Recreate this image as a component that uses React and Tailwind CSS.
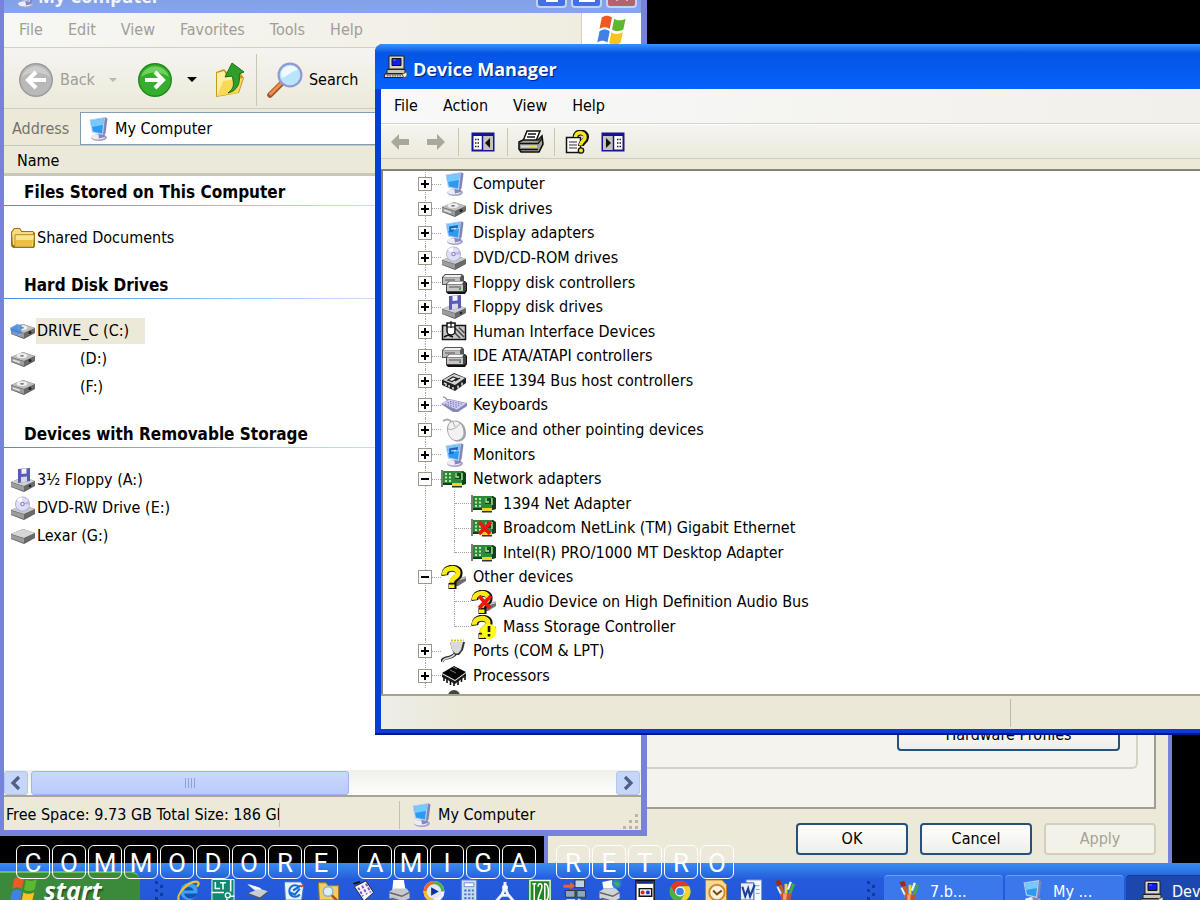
import React from 'react'

const UI = "font-['DejaVu_Sans_Condensed','DejaVu_Sans',sans-serif]"

/* ---------- icons ---------- */

function Svg({ children, className = 'h-6 w-[26px]', box = '0 0 26 24' }){
  return <svg className={`block shrink-0 ${className}`} viewBox={box} aria-hidden="true">{children}</svg>
}

function ComputerArt(){
  return (
    <>
      <ellipse cx="14" cy="20.500" rx="8" ry="3.500" fill="#a3a3c6" />
      <ellipse cx="13" cy="19.800" rx="7" ry="2.600" fill="#ededf8" />
      <path d="M13 15l6-1 1 6-6 1.500z" fill="#8886bd" />
      <path d="M19.500 0l3 1.500-2 15-3.500 2z" fill="#8082b8" />
      <path d="M4.500 2.500L20 0l-2 18L7 15.500z" fill="#bccdf0" />
      <path d="M5.800 3.800L18.700 1.500 17 16.500 8 14.500z" fill="#2a9bee" />
      <path d="M5.800 3.800L18.700 1.500 18 8 7 10z" fill="#74caff" />
    </>
  )
}

function Computer({ className }){
  return <Svg className={className}><ComputerArt /></Svg>
}

function Display(){
  return (
    <Svg>
      <ComputerArt />
      <path d="M8 5.500l9-1.500-.4 3-3.400.6-1 3-3.700.6z" fill="#1c62c4" />
      <path d="M10 8l5-.7" stroke="#a9f0ff" strokeWidth="1.200" />
    </Svg>
  )
}

function DriveArt({ top = '#e6e6e6' }){
  return (
    <>
      <path d="M1 10l12-5 12 4v5l-11 6-13-5z" fill="#5c5c5c" />
      <path d="M1 10l12-5 12 4-11 5z" fill={top} />
      <path d="M1 10.500l13 4v4.500L1 14.500z" fill="#9c9c9c" />
      <path d="M14 14.500l11-5v4L14 19z" fill="#6a6a6a" />
    </>
  )
}

function Disk({ blue }){
  return (
    <Svg>
      <DriveArt top="#bdbdbd" />
      <ellipse cx="12" cy="8.800" rx="5.500" ry="2.500" fill="#f0f0f0" />
      <ellipse cx="12" cy="8.800" rx="2" ry=".9" fill="#777" />
      <path d="M3 13l7 2.500" stroke="#e4e4e4" strokeWidth="1.500" />
      <circle cx="20" cy="13.500" r="1.500" fill="#222" />
      {blue && <path d="M0 9l7-4 5 1-1 9-3 1-7-3z" fill="#3f84dc" opacity=".8" />}
    </Svg>
  )
}

function PlainDrive(){
  return <Svg><DriveArt top="#d6d6d6" /></Svg>
}

function Dvd(){
  return (
    <Svg>
      <g transform="translate(0 4)"><DriveArt top="#c9c9c9" /></g>
      <circle cx="12.500" cy="8" r="7.500" fill="#aaaad2" />
      <circle cx="12.500" cy="8" r="6.700" fill="#dedef6" />
      <path d="M12.500 8L7 3.500A7 7 0 0 1 12 1.300z" fill="#fff" />
      <path d="M12.500 8l6-3a7 7 0 0 1 .5 3.500z" fill="#b8b6ee" />
      <circle cx="12.500" cy="8" r="2.300" fill="#8c8ad0" />
      <circle cx="12.500" cy="8" r="1.100" fill="#fff" />
    </Svg>
  )
}

function Floppy(){
  return (
    <Svg>
      <g transform="translate(0 4)"><DriveArt top="#cfcfcf" /></g>
      <path d="M8 1l12-1v13l-12 2z" fill="#5a5cb4" />
      <path d="M11.500 1l5-.5v5l-5 .5z" fill="#f2f2fc" />
      <path d="M11 9l6-.5v5l-6 1z" fill="#d8d8f0" />
      <circle cx="20" cy="18" r="1.300" fill="#222" />
    </Svg>
  )
}

function Controllers(){
  return (
    <Svg>
      <path d="M1 6l3-3h17l2 2v9H1z" fill="#555" />
      <path d="M2 6.500L4.500 4h16L19 6.500z" fill="#f0f0f0" />
      <path d="M2 7h17v6H2z" fill="#bdbdbd" />
      <path d="M4 9h10" stroke="#555" />
      <path d="M22 10h2l2 2v8l-2 3H7l-2-2 17-1z" fill="#111" />
      <path d="M5 13l3-3h15l2 2v7l-2 2H5z" fill="#444" />
      <path d="M6 13l2.500-2.500h14L21 13z" fill="#fbfbfb" />
      <path d="M6 13.500h16V20H6z" fill="#c6c6c6" />
      <path d="M8 16h12" stroke="#555" />
      <path d="M18 18h2" stroke="#2c8c2c" strokeWidth="1.500" />
    </Svg>
  )
}

function Hid(){
  return (
    <Svg>
      <path d="M1.500 5.500h23v14h-23z" fill="#c8c8c8" stroke="#111" strokeWidth="1.500" />
      <path d="M14 8l9 9M18 7.500l5.500 5.500M13 12l6 6" stroke="#444" strokeWidth="1.500" />
      <path d="M6 3v8a4 4 0 0 0 8 0V3z" fill="#fff" stroke="#111" strokeWidth="1.500" />
      <path d="M10 1v7M6 7h8" stroke="#111" strokeWidth="1.200" />
      <path d="M3 17l4-2 5 2" stroke="#111" strokeWidth="1.500" fill="none" />
    </Svg>
  )
}

function Firewire(){
  return (
    <Svg>
      <path d="M1 11L13 4l12 5v5l-11 8-13-6z" fill="#222" />
      <path d="M2 11l11-6 11 4-10 7z" fill="#d5d5d5" />
      <path d="M7 11l5-3 4 1.500-5 3zM14 12l5-3" stroke="#222" strokeWidth="1.200" fill="#f4f4f4" />
      <path d="M3 14l2 1v2M8 16v2.500M12 18v2.500M17 16.500v3M21 13.500v3" stroke="#ddd" strokeWidth="1.500" />
    </Svg>
  )
}

function Keyboard(){
  return (
    <Svg>
      <path d="M2 4c4 0 2 3 6 3" stroke="#9a9ac0" strokeWidth="1.500" fill="none" />
      <path d="M0 11l8-5 18 4v3l-9 6-5 0z" fill="#8685b8" />
      <path d="M1 10.500L8.500 6.500 25 10.500l-9 6z" fill="#d3d2f0" />
      <path d="M4 11l13 3.500M6.500 9.500l13 3.500M9 8.300l13 3" stroke="#7a79b8" strokeWidth="1.200" strokeDasharray="1.500 1.200" />
    </Svg>
  )
}

function Mouse(){
  return (
    <Svg>
      <path d="M2 3c5-3 8-1 10 3" stroke="#aaa" strokeWidth="2" fill="none" />
      <path d="M8 5c7-6 17 0 17 10 0 6-4 9-9 8.500C8 23 3 11 8 5z" fill="#a2a2a8" />
      <path d="M8.500 5.500c7-5 14 0 14 9.500 0 5-4 7.500-8 7C8 21.500 5 11.500 8.500 5.500z" fill="#f2f2f4" />
      <path d="M7 11c4 1.500 9-1 12-6M12 4l2 5" stroke="#aaa" fill="none" />
    </Svg>
  )
}

function CardArt(){
  return (
    <>
      <path d="M1 4h21l3 2v11l-3 1H1z" fill="#11401a" />
      <path d="M1 4h20v12H1z" fill="#2c8a38" />
      <path d="M0 3h2v17H0z" fill="#7d7d7d" />
      <path d="M4 6h2v2H4zM8 6h2v2H8zM4 9.500h2v2H4zM8 9.500h2v2H8zM4 13h2v2H4zM8 13h2v2H8z" fill="#b4e8a8" />
      <path d="M14 6h6v6h-6z" fill="#0e4c18" />
      <path d="M15 6v4h3M21 6v7" stroke="#b4e8a8" strokeWidth="1.300" fill="none" />
      <path d="M11 16h10v3H11z" fill="#e8d526" />
      <path d="M11 19h10v1.500H11z" fill="#333" />
    </>
  )
}

function RedX(){
  return <path d="M8 6l11 12M20 6L8 18" stroke="#f01515" strokeWidth="3.600" />
}

function Card({ disabled }){
  return <Svg><CardArt />{disabled && <RedX />}</Svg>
}

function Question({ mark }){
  return (
    <Svg>
      <path d="M15 16l10-3v3l-8 5h-5z" fill="#6e6e6e" />
      <path d="M15 14l10-2" stroke="#aaa" strokeWidth="1.500" />
      <path d="M4 10.500c-1.500-9.500 15-9 14-2 0 5-6 4-6 9.500" stroke="#111" strokeWidth="7" fill="none" />
      <path d="M7.500 18h8v6h-8z" fill="#111" />
      <path d="M3.500 9.800c-1-8.500 14-8 13.500-1.800 0 5-6.500 4-6.500 9.700" stroke="#f8ec14" strokeWidth="5" fill="none" />
      <path d="M8 19.500h5.500V23H8z" fill="#f8ec14" />
      {mark === 'x' && <RedX />}
      {mark === '!' && (
        <>
          <circle cx="18" cy="16.500" r="7.500" fill="#ffff14" />
          <path d="M18 11v6M18 19v2.500" stroke="#111" strokeWidth="2.600" />
        </>
      )}
    </Svg>
  )
}

function Port(){
  return (
    <Svg>
      <path d="M1 23c1-7 8-1 14-9" stroke="#222" strokeWidth="3.500" fill="none" />
      <path d="M1.500 23c1-6 8-1 13-9" stroke="#d8d8d8" strokeWidth="1.500" fill="none" />
      <path d="M9 3h15l-2 8-4 5h-4l-3-5z" fill="#333" />
      <path d="M9 3h13l-2 8-3 3.500h-2.500L11 11z" fill="#d9d9d9" />
      <path d="M10 1.500h13" stroke="#d8c820" strokeWidth="2" strokeDasharray="2 1" />
    </Svg>
  )
}

function Cpu(){
  return (
    <Svg>
      <path d="M1 9L13 2l12 6-11 8z" fill="#050505" />
      <path d="M1 10l13 7 11-8v3l-11 8-13-7z" fill="#222" />
      <path d="M3 12v5M6 14v5M9.500 16v5M13 18v4M17 16v5M20.500 13v5M24 11v5" stroke="#111" strokeWidth="1.600" />
      <path d="M12 3l4 2M9 6l6 3" stroke="#777" />
    </Svg>
  )
}

function OldPc({ className = 'h-6 w-6' }){
  return (
    <Svg className={className} box="0 0 24 24">
      <path d="M5 1h15v13H5z" fill="#d8d4c8" stroke="#222" />
      <path d="M8 3.500h9v7H8z" fill="#1020e0" stroke="#111" />
      <path d="M9 5h3" stroke="#5a78ff" />
      <path d="M3 14.500h18v4H3z" fill="#c9c5b9" stroke="#222" />
      <path d="M1 19h18l1 3.500H0z" fill="#ddd9cd" stroke="#222" />
      <path d="M3 20.800h14" stroke="#444" strokeDasharray="1.500 1" />
      <path d="M18 19l5-2v4l-3 2z" fill="#eee" stroke="#555" />
    </Svg>
  )
}

function Folder(){
  return (
    <Svg>
      <path d="M1 6l3-4h6l2 3h11l2 2v13l-1 2H3l-2-2z" fill="#9c7312" />
      <path d="M2 6.500L4.500 3h5l2 3H23v13H3z" fill="#f6dc7c" />
      <path d="M5 9h19l-1 11.500H5z" fill="#fbe58c" />
      <path d="M6 14h17l-1 6H6z" fill="#eebf42" />
      <path d="M5 8.700h19M5 9v11" stroke="#b88a1c" />
    </Svg>
  )
}

function Flag({ className }){
  return (
    <Svg className={className} box="0 0 30 28">
      <path d="M6 3c3-2 6-2 9 0l-2 10c-3-2-6-2-9 0z" fill="#ee5a26" />
      <path d="M17 4c3 2 6 2 10 0l-2 9.500c-4 2-7 2-10 0z" fill="#5cb82c" />
      <path d="M4 15c3-2 6-2 9 0l-2 10c-3-2-6-2-9 0z" fill="#3f82e4" />
      <path d="M14.500 16c3 2 6 2 10 0l-2 9.500c-4 2-7 2-10 0z" fill="#fac21c" />
    </Svg>
  )
}

function RoundArrow({ back }){
  return (
    <svg className="block size-9 shrink-0" viewBox="0 0 36 36" aria-hidden="true">
      <circle cx="18" cy="18" r="17" fill={back ? '#9b9b9b' : '#1f8a1c'} />
      <circle cx="18" cy="18" r="15.500" fill={back ? '#b9b9b9' : '#35ae2c'} />
      <path d="M4 15a14.500 14.500 0 0 1 28 0C24 9 12 9 4 15z" fill={back ? '#cdcdcd' : '#74cf62'} />
      <path d={back ? 'M28 18H11M18 10l-8 8 8 8' : 'M8 18h17M18 10l8 8-8 8'} stroke="#fff" strokeWidth="4" fill="none" />
    </svg>
  )
}

function FolderUp(){
  return (
    <svg className="block h-9 w-8 shrink-0" viewBox="0 0 32 36" aria-hidden="true">
      <path d="M2 10l8-3 3 3 12-1 5 7-5 15-23 4z" fill="#c79a1e" />
      <path d="M3 11l7-2 2 4 11-1v18L3 34z" fill="#fdf0a4" />
      <path d="M3 34l6-15 20-3-5 15z" fill="#f9d957" />
      <path d="M14 31c7-5 6-10 4-17l-7 1L18 1l12 9-5 2c2 9-2 17-11 19z" fill="#2f9e2b" stroke="#17701a" />
    </svg>
  )
}

function Magnifier(){
  return (
    <svg className="block size-9 shrink-0" viewBox="0 0 36 36" aria-hidden="true">
      <path d="M3 33L15 21" stroke="#a2522a" strokeWidth="5.500" strokeLinecap="round" />
      <path d="M3.500 32L14 21.500" stroke="#f0914a" strokeWidth="3" strokeLinecap="round" />
      <circle cx="23" cy="13" r="12.500" fill="#8f9bd0" />
      <circle cx="23" cy="13" r="10.300" fill="#b9e4fb" />
      <path d="M14 11a9.500 9.500 0 0 1 17-3c-5 0-10 6-16 8z" fill="#eefaff" />
    </svg>
  )
}

/* 24px quick launch drawings, in taskbar order */
const QUICK = [
  ['Internet Explorer', <>
    <circle cx="13" cy="13" r="9" fill="#3ea2ee" />
    <path d="M8 12h10c-1-5-9-5-10 0zM8 15h14c-2 7-13 7-14 0z" fill="#1650b8" />
    <path d="M3 23C-2 17 13 1 22 3c3 2-1 5-1 5" stroke="#f4c02c" strokeWidth="2.200" fill="none" />
  </>],
  ['LT', <>
    <path d="M.5.500h23v24H.5z" fill="#0f8a70" stroke="#e8fff8" />
    <path d="M4 3v7h5M9 4h6M12 4v7M20 1v12M0 14h13M20 18h4M16 20v5" stroke="#fff" strokeWidth="1.600" fill="none" />
    <circle cx="17" cy="17" r="2.600" fill="none" stroke="#fff" strokeWidth="1.400" />
  </>],
  ['Scanner', <>
    <path d="M1 6l12 4 10 3-9 7-13-5 8-3z" fill="#c8ccd4" />
    <path d="M1 5l13 4 2 2-8 0z" fill="#fff" />
    <path d="M1 15l13 5 9-7" stroke="#555" strokeWidth="1.500" fill="none" />
  </>],
  ['Outlook Express', <>
    <path d="M2 3h17l3 4-2 15H3z" fill="#e8f3fc" stroke="#3d78c0" />
    <path d="M17 8a6 6 0 1 0 1 8M11 12l8-5M8 14l5 2 5-6" stroke="#1f6cd0" strokeWidth="2.200" fill="none" />
    <path d="M19 8l4-2" stroke="#e03a20" strokeWidth="2" />
  </>],
  ['Search folder', <>
    <path d="M1 4h8l2 3h11v15H2z" fill="#f2cf62" stroke="#a87814" />
    <circle cx="11" cy="13" r="5" fill="#d9f0fb" stroke="#8fb2cc" strokeWidth="1.500" />
    <path d="M15 17l5 5" stroke="#a8501c" strokeWidth="2.500" />
  </>],
  ['Cards', <>
    <path d="M2 8l12-6 8 12-10 9z" fill="#f6f6fb" stroke="#222" />
    <path d="M6 9l5 9M10 7l5 9M14 5l5 9" stroke="#7d52c0" strokeWidth="2" strokeDasharray="3 1.500" />
    <path d="M1 5l7-2" stroke="#111" strokeWidth="2" />
  </>],
  ['Printer', <>
    <path d="M6 1h11l2 11H5z" fill="#fff" />
    <path d="M2 13l5-3h13l3 4v6l-8 4L2 20z" fill="#c5c8cf" />
    <path d="M2 14l13 4 8-4M4 20l10 3" stroke="#666" strokeWidth="1.500" fill="none" />
  </>],
  ['Media Player', <>
    <circle cx="12" cy="13" r="11" fill="#f0f4fa" />
    <path d="M12 2a11 11 0 0 1 11 11h-4a7 7 0 0 0-7-7z" fill="#4fb04a" />
    <path d="M12 2A11 11 0 0 0 1 13h4a7 7 0 0 1 7-7z" fill="#e8672c" />
    <path d="M1 13a11 11 0 0 0 11 11v-4a7 7 0 0 1-7-7z" fill="#f3bc30" />
    <circle cx="12" cy="13" r="7.500" fill="#dfe8f6" />
    <path d="M9 8.500l8 4.500-8 4.500z" fill="#12309c" />
  </>],
  ['Calculator', <>
    <path d="M4 1h16v24H4z" fill="#c8dcf6" stroke="#5880c4" />
    <path d="M7 4h10v4H7z" fill="#fff" stroke="#6a8cc8" />
    <path d="M7 12h10M7 16h10M7 20h10" stroke="#4a76c4" strokeWidth="2" strokeDasharray="2.500 1.500" />
  </>],
  ['Compass', <>
    <path d="M12 3v6M12 9l-3 7-6 7M12 9l3 7 6 7M8 17h8" stroke="#f2f5fb" strokeWidth="3" fill="none" />
    <circle cx="12" cy="9" r="3" fill="#fff" />
  </>],
  ['I2D', <>
    <path d="M0 0h24v25H0z" fill="#23851f" />
    <path d="M1.500 24V1.500h21V24" stroke="#e9ffe5" strokeWidth="1.500" fill="none" />
    <path d="M6 5v18M4 5h4M10 8c0-4 4-4 4 0s-4 9-4 14h4M17 5v18c5 0 5-18 0-18z" stroke="#fff" strokeWidth="1.600" fill="none" />
  </>],
  ['Network', <>
    <path d="M12 1h10v8H12z" fill="#bcd3ea" stroke="#333" />
    <path d="M2 12h10v7H2zM14 12h9v7h-9z" fill="#8fa8c0" stroke="#333" />
    <path d="M0 6h7V3l5 4-5 4V9H0z" fill="#f0602c" />
    <path d="M3 22h9M15 21l5 3" stroke="#f2e13c" strokeWidth="2.500" />
  </>],
  ['Network printer', <>
    <path d="M4 3l10-2 3 9H5z" fill="#fff" />
    <circle cx="19" cy="5" r="5" fill="#2b7fd0" />
    <path d="M16 4c3-3 6 0 6 3-3 2-5 0-6-3z" fill="#3fb24a" />
    <path d="M1 13l5-3h12l4 4v6l-7 4L1 20z" fill="#d0d3d8" />
    <path d="M1 14l14 4 7-4M3 20l11 3" stroke="#666" strokeWidth="1.500" fill="none" />
  </>],
  ['Program', <>
    <path d="M2.500 1.500h19V25h-19z" fill="#fff" stroke="#111" strokeWidth="1.500" />
    <path d="M3 2h18v3H3z" fill="#1b2b8c" />
    <path d="M6 10h13v8H6z" fill="#e8e8e8" stroke="#111" strokeWidth="1.500" />
    <circle cx="9.500" cy="14" r="2" fill="#d22" /><circle cx="15" cy="14" r="2" fill="#23c" />
  </>],
  ['Chrome', <>
    <circle cx="12" cy="13" r="11" fill="#4caf45" />
    <path d="M2.500 7.500A11 11 0 0 1 21.500 7.500H12L7.500 16z" fill="#e2382c" />
    <path d="M21.500 7.500A11 11 0 0 1 12 24l5-9-3-7.500z" fill="#fbd02c" />
    <circle cx="12" cy="13" r="5.200" fill="#fff" /><circle cx="12" cy="13" r="4" fill="#3b82e8" />
  </>],
  ['Outlook', <>
    <path d="M1 1h17l5 5v19H1z" fill="#f7d79a" stroke="#c07a1c" />
    <circle cx="13" cy="14" r="8" fill="#fdf3dc" stroke="#d08a24" strokeWidth="2" />
    <path d="M9 12l4 4 5-4" stroke="#7a4a10" strokeWidth="2" fill="none" />
  </>],
  ['Word', <>
    <path d="M7 1h16v22H7z" fill="#f5f8fd" stroke="#7c96c8" />
    <path d="M1 4h14v18H1z" fill="#e6eefb" stroke="#2c54a8" />
    <path d="M3 8l3 10 3-8 2 8 5-12" stroke="#1d3f98" strokeWidth="2.200" fill="none" />
    <path d="M17 7h4M17 11h4M17 15h4" stroke="#8aa0d0" />
  </>],
  ['Paint', <BrushArt key="b" />],
]

function BrushArt(){
  return (
    <>
      <path d="M5 3l5 15" stroke="#d05a1c" strokeWidth="3" />
      <path d="M12 5v12" stroke="#f2d23a" strokeWidth="3" />
      <path d="M20 5l-5 13" stroke="#3fae42" strokeWidth="3" />
      <path d="M3 8l5 10" stroke="#efefef" strokeWidth="2" />
      <path d="M1 2l5-1 2 5-5 1z" fill="#a02a14" />
      <path d="M14 11l3-8" stroke="#f4f4f4" strokeWidth="2.500" />
      <path d="M6 15h12l-2 10H8z" fill="#c8502a" />
      <path d="M9 15h4l-1 10H9z" fill="#e8a07a" />
    </>
  )
}

/* ---------- data ---------- */

const DEVICES = [
  { name: 'Computer', icon: <Computer /> },
  { name: 'Disk drives', icon: <Disk /> },
  { name: 'Display adapters', icon: <Display /> },
  { name: 'DVD/CD-ROM drives', icon: <Dvd /> },
  { name: 'Floppy disk controllers', icon: <Controllers /> },
  { name: 'Floppy disk drives', icon: <Floppy /> },
  { name: 'Human Interface Devices', icon: <Hid /> },
  { name: 'IDE ATA/ATAPI controllers', icon: <Controllers /> },
  { name: 'IEEE 1394 Bus host controllers', icon: <Firewire /> },
  { name: 'Keyboards', icon: <Keyboard /> },
  { name: 'Mice and other pointing devices', icon: <Mouse /> },
  { name: 'Monitors', icon: <Display /> },
  { name: 'Network adapters', icon: <Card />, open: true },
  { name: '1394 Net Adapter', icon: <Card />, child: true },
  { name: 'Broadcom NetLink (TM) Gigabit Ethernet', icon: <Card disabled />, child: true },
  { name: 'Intel(R) PRO/1000 MT Desktop Adapter', icon: <Card />, child: true, last: true },
  { name: 'Other devices', icon: <Question />, open: true },
  { name: 'Audio Device on High Definition Audio Bus', icon: <Question mark="x" />, child: true },
  { name: 'Mass Storage Controller', icon: <Question mark="!" />, child: true, last: true },
  { name: 'Ports (COM & LPT)', icon: <Port /> },
  { name: 'Processors', icon: <Cpu /> },
]

const SECTIONS = [
  { title: 'Files Stored on This Computer', items: [{ name: 'Shared Documents', icon: <Folder /> }] },
  {
    title: 'Hard Disk Drives',
    items: [
      { name: 'DRIVE_C (C:)', icon: <Disk blue />, selected: true },
      { name: '(D:)', icon: <Disk />, blank: true },
      { name: '(F:)', icon: <Disk />, blank: true },
    ],
  },
  {
    title: 'Devices with Removable Storage',
    items: [
      { name: '3½ Floppy (A:)', icon: <Floppy /> },
      { name: 'DVD-RW Drive (E:)', icon: <Dvd /> },
      { name: 'Lexar (G:)', icon: <PlainDrive /> },
    ],
  },
]

/* ---------- My Computer ---------- */

function Caption({ children, label, red }){
  return (
    <button aria-label={label} className={`flex h-8 w-[31px] items-end justify-center rounded-[4px] border-2 border-[#c3d3f8] pb-1 ${red ? 'bg-[#b5616e]' : 'bg-[#4370e4]'}`}>
      {children}
    </button>
  )
}

function MyComputer(){
  return (
    <section className="absolute -top-6 bottom-[27px] left-0 flex w-[647px] flex-col border-r-[6px] border-b-[6px] border-l-4 border-[#7682dc] bg-[#ece9d8]">
      <header className="flex h-[37px] shrink-0 items-start justify-between bg-linear-to-b from-[#7a96df] to-[#86a6ec] pl-2">
        <div className="flex items-center pt-2">
          <Computer />
          <h2 className="font-['Open_Sans',sans-serif] text-[18px] leading-6 font-bold text-[#f0f4fe]">My Computer</h2>
        </div>
        <div className="flex gap-1 pr-1">
          <Caption label="Minimize"><span className="h-1 w-3 bg-white" /></Caption>
          <Caption label="Maximize"><span className="h-4 w-4 border-2 border-t-4 border-white" /></Caption>
          <Caption label="Close" red>
            <svg className="block size-4" viewBox="0 0 16 16" aria-hidden="true"><path d="M2 2l12 12M14 2L2 14" stroke="#fff" strokeWidth="3" /></svg>
          </Caption>
        </div>
      </header>

      <div className="flex h-[35px] shrink-0 border-b border-[#d4d0c0] bg-linear-to-r from-[#f7f7f5] to-[#efecde] text-[#a19e93]">
        <nav className="flex flex-1 items-center gap-[25px] pl-[15px]">
          {['File', 'Edit', 'View', 'Favorites', 'Tools', 'Help'].map(m => <button key={m}>{m}</button>)}
        </nav>
        <div className="flex w-[60px] items-center justify-center border-l border-[#d4d0c0] bg-white"><Flag className="h-8 w-[34px]" /></div>
      </div>

      <div className="flex h-[61px] shrink-0 items-center border-b border-[#d0cdbd] bg-linear-to-b from-[#f5f4f0] to-[#eceadb] pt-[3px] pl-[14px]">
        <button className="flex items-center gap-[6px] text-[#a19e93]"><RoundArrow back />Back</button>
        <span className="ml-[14px] border-x-4 border-t-4 border-x-transparent border-t-[#b9b6aa]" />
        <button aria-label="Forward" className="ml-5"><RoundArrow /></button>
        <span className="ml-[14px] border-x-[5px] border-t-[5px] border-x-transparent border-t-black" />
        <button aria-label="Up" className="ml-[17px]"><FolderUp /></button>
        <span className="mr-[10px] ml-[10px] h-[52px] w-px bg-[#c9c6b6]" />
        <button className="flex items-center gap-[6px]"><Magnifier />Search</button>
      </div>

      <div className="flex h-[37px] shrink-0 items-center border-b border-[#cbc7b8] pt-[3px] pl-2 text-[#75736a]">
        <label htmlFor="address" className="w-[68px]">Address</label>
        <div className="flex h-full flex-1 items-center gap-1 border border-[#7f9db9] bg-white pl-1 text-black">
          <Computer />
          <input id="address" defaultValue="My Computer" className="w-full bg-transparent outline-none" />
        </div>
      </div>

      <div className="h-[30px] shrink-0 border-b-[3px] border-[#cbc7b8] bg-[#ebe9da] pl-[13px] leading-[30px]">Name</div>

      <div className="min-h-0 flex-1 bg-white pt-px">
        {SECTIONS.map(s => (
          <div key={s.title}>
            <h3 className="h-7 pl-5 text-[17px] leading-[30px] font-bold">{s.title}</h3>
            <div className="h-px bg-linear-to-r from-[#3f8cf0] via-[#b9d6fa] to-white" />
            <ul className="py-[18px]">
              {s.items.map(it => (
                <li key={it.name} className="flex h-7 items-center pl-[6px]">
                  {it.icon}
                  <span className={it.selected ? 'bg-[#ece9d8] pr-4 pl-px leading-[26px]' : it.blank ? 'pl-11' : 'pl-px'}>{it.name}</span>
                </li>
              ))}
            </ul>
          </div>
        ))}
      </div>

      <div className="flex h-[27px] shrink-0 items-center border-b-2 border-[#a8a597] bg-linear-to-b from-[#f0efe9] to-[#fefefd]">
        <button aria-label="Scroll left" className="flex h-6 w-6 items-center justify-center rounded-[3px] border border-[#b3c6f2] bg-[#c6d6fb]"><Chevron left /></button>
        <div className="ml-[3px] flex h-6 w-[318px] items-center justify-center gap-0.5 rounded-[3px] border border-[#9cb5ee] bg-linear-to-b from-[#c9d8fd] to-[#b9cbf8]">
          {[0, 1, 2, 3].map(n => <span key={n} className="h-[10px] w-px bg-[#8aa3dd]" />)}
        </div>
        <button aria-label="Scroll right" className="mr-px ml-auto flex h-6 w-6 items-center justify-center rounded-[3px] border border-[#b3c6f2] bg-[#c6d6fb]"><Chevron /></button>
      </div>

      <footer className="flex h-[33px] shrink-0 items-center pt-0.5">
        <span className="w-[276px] overflow-hidden border-r border-[#c3c0b0] pl-0.5 whitespace-nowrap">Free Space: 9.73 GB Total Size: 186 GB</span>
        <span className="h-7 w-[120px] border-r border-[#c3c0b0]" />
        <span className="flex items-center gap-1 pl-2"><Computer />My Computer</span>
        <svg className="mt-auto ml-auto block size-5" viewBox="0 0 20 20" aria-hidden="true">
          <path d="M14 4h3v3h-3zM14 10h3v3h-3zM8 10h3v3H8zM14 16h3v3h-3zM8 16h3v3H8zM2 16h3v3H2z" fill="#bab6a4" />
        </svg>
      </footer>
    </section>
  )
}

function Chevron({ left }){
  return (
    <svg className="block size-4" viewBox="0 0 16 16" aria-hidden="true">
      <path d={left ? 'M11 2L5 8l6 6' : 'M5 2l6 6-6 6'} stroke="#4d6185" strokeWidth="3.200" fill="none" />
    </svg>
  )
}

/* ---------- System properties, behind the other windows ---------- */

function DialogButton({ children, disabled }){
  return (
    <button disabled={disabled} className={`h-8 w-28 rounded-[4px] border-2 ${disabled ? 'border-[#d2cfbf] bg-[#f3f2e9] text-[#a5a294]' : 'border-[#26517f] bg-linear-to-b from-white to-[#efeee8]'}`}>
      {children}
    </button>
  )
}

function Properties(){
  return (
    <section className="absolute top-[400px] right-7 bottom-0 left-[544px] flex flex-col border-x-4 border-[#7682dc] bg-[#ece9d8] px-3">
      <div className="flex min-h-0 flex-1 flex-col border-r-2 border-b-2 border-[#a09e93] bg-[#f4f3ee] pr-4 pb-[38px]">
        <div className="flex flex-1 items-end justify-end rounded-br-[6px] border-r-2 border-b-2 border-[#d5d3c5] pr-4 pb-4">
          <button className="h-8 w-[223px] rounded-[4px] border-2 border-[#26517f] bg-linear-to-b from-white to-[#efeee8]">Hardware Profiles</button>
        </div>
      </div>
      <div className="flex h-[54px] items-center justify-end gap-3 pt-[6px]">
        <DialogButton>OK</DialogButton>
        <DialogButton>Cancel</DialogButton>
        <DialogButton disabled>Apply</DialogButton>
      </div>
    </section>
  )
}

/* ---------- Device Manager ---------- */

function PaneIcon({ flip }){
  return (
    <svg className={`block h-5 w-6 ${flip ? '-scale-x-100' : ''}`} viewBox="0 0 24 20" aria-hidden="true">
      <path d="M1.500 1.500h21v17h-21z" fill="#fff" stroke="#16168c" strokeWidth="2" />
      <path d="M1 1h22v3H1z" fill="#16168c" />
      <path d="M12 4h10v14H12z" fill="#c6c3b8" />
      <path d="M11.500 4v14" stroke="#16168c" strokeWidth="1.500" />
      <path d="M4 7.500h5M4 11h5M4 14.500h5" stroke="#222" strokeWidth="1.500" strokeDasharray="1.500 1" />
      <path d="M19 6v10l-5-5z" fill="#111" />
    </svg>
  )
}

function TinyArrow({ left }){
  return (
    <svg className="block h-5 w-5" viewBox="0 0 20 20" aria-hidden="true">
      <path d={left ? 'M1 10l8-8v5h10v6H9v5z' : 'M19 10l-8-8v5H1v6h10v5z'} fill="#aba899" />
    </svg>
  )
}

function PrintIcon(){
  return (
    <svg className="block h-6 w-[26px]" viewBox="0 0 26 24" aria-hidden="true">
      <path d="M9 1h13l-4 10H5z" fill="#fff" stroke="#111" strokeWidth="1.500" />
      <path d="M10 4h8M9 7h8" stroke="#111" strokeWidth="1.300" />
      <path d="M1 12l4-2h15l4-4 1 8-4 8H3l-2-3z" fill="#a3a196" stroke="#111" strokeWidth="1.600" />
      <path d="M2 13.500h18l4-5M2 19.500h18" stroke="#111" strokeWidth="1.300" fill="none" />
      <path d="M3 16.500h16" stroke="#ddd" strokeWidth="2" />
      <path d="M12 16.500h5" stroke="#e8dc20" strokeWidth="2" />
    </svg>
  )
}

function HelpIcon(){
  return (
    <svg className="block h-6 w-6" viewBox="0 0 24 24" aria-hidden="true">
      <path d="M1.500 7.500h14v15h-14z" fill="#fff" stroke="#111" strokeWidth="1.500" />
      <path d="M4 12h8M4 15h8M4 18h8" stroke="#777" strokeWidth="1.300" />
      <path d="M10.500 7.500c0-7 11-6.500 10.500 0 0 4-5 4-5 8.500" stroke="#111" strokeWidth="6" fill="none" />
      <circle cx="16" cy="20.500" r="3.300" fill="#111" />
      <path d="M10.500 7c0-6 10-5.500 9.500.5 0 4-4.500 3.500-4.500 8" stroke="#f4e628" strokeWidth="3.600" fill="none" />
      <circle cx="16" cy="20.500" r="2" fill="#f4e628" />
    </svg>
  )
}

function TreeRow({ device }){
  const { name, icon, open, child, last } = device
  return (
    <li className="relative flex items-center pl-[35px]">
      <span className="absolute inset-y-0 left-[42px] border-l border-dotted border-[#a8a598]" />
      {child ? (
        <>
          <span className={`absolute top-0 left-[71px] border-l border-dotted border-[#a8a598] ${last ? 'bottom-1/2' : 'bottom-0'}`} />
          <span className="ml-[37px] w-4 border-t border-dotted border-[#a8a598]" />
        </>
      ) : (
        <>
          <button aria-label={open ? `Collapse ${name}` : `Expand ${name}`} className="relative flex size-[14px] items-center justify-center border border-[#9b9889] bg-white">
            <span className="absolute h-0.5 w-2 bg-black" />
            {!open && <span className="absolute h-2 w-0.5 bg-black" />}
          </button>
          <span className="w-[9px] border-t border-dotted border-[#a8a598]" />
        </>
      )}
      {icon}
      <span className="pl-[6px] whitespace-nowrap">{name}</span>
    </li>
  )
}

function DeviceManager(){
  return (
    <section className="absolute top-11 right-0 left-[375px] flex h-[689px] flex-col rounded-tl-lg border-b-4 border-l-[6px] border-[#0a3cd8] bg-[#ece9d8] shadow-[0_2px_0_#00168f]">
      <header className="-ml-[6px] flex h-[45px] shrink-0 items-center gap-1 rounded-tl-lg bg-linear-to-b from-[#3a90ff] via-[#0455e4] via-20% to-[#0662fb] pl-2">
        <OldPc className="h-6 w-[26px]" />
        <h1 className="pt-1 font-['Open_Sans',sans-serif] text-[18px] leading-6 font-bold text-white [text-shadow:1px_1px_1px_#0a1883]">Device Manager</h1>
      </header>

      <nav className="flex h-[35px] shrink-0 items-center gap-[25px] border-b border-[#d8d5c6] bg-linear-to-r from-[#f9f9f9] to-[#f1f0ea] pl-[13px]">
        {['File', 'Action', 'View', 'Help'].map(m => <button key={m}>{m}</button>)}
      </nav>

      <div className="flex h-[35px] shrink-0 items-center border-t border-b border-t-white border-b-[#d0cdbe] bg-linear-to-b from-[#f5f4ef] to-[#eceadc] pl-[9px]">
        <button aria-label="Back"><TinyArrow left /></button>
        <button aria-label="Forward" className="ml-4"><TinyArrow /></button>
        <span className="mx-3 h-7 w-px bg-[#c9c6b6]" />
        <button aria-label="Show console tree"><PaneIcon /></button>
        <span className="mr-[10px] ml-3 h-7 w-px bg-[#c9c6b6]" />
        <button aria-label="Print"><PrintIcon /></button>
        <span className="mx-[10px] h-7 w-px bg-[#c9c6b6]" />
        <button aria-label="Help"><HelpIcon /></button>
        <button aria-label="Show action pane" className="ml-3"><PaneIcon flip /></button>
      </div>

      <div className="mt-[10px] min-h-0 flex-1 overflow-hidden border-t-2 border-l-2 border-[#858375] bg-white pt-px">
        <ul className="grid h-[516px] auto-rows-fr">
          {DEVICES.map(d => <TreeRow key={d.name} device={d} />)}
        </ul>
        <div className="mt-0.5 ml-[65px] h-3 w-3 rounded-full bg-[#444]" />
      </div>

      <footer className="flex h-[35px] shrink-0 items-center border-t-2 border-[#a5a294] bg-linear-to-r from-[#eeeee8] to-[#ebe8d8] to-10%">
        <span className="h-7 w-[630px] border-r border-[#bdb9a8]" />
      </footer>
    </section>
  )
}

/* ---------- taskbar ---------- */

function Grip(){
  return (
    <svg className="block h-8 w-[10px] shrink-0" viewBox="0 0 10 32" aria-hidden="true">
      <path d="M1 6h3v3H1zM6 10h3v3H6zM1 14h3v3H1zM6 18h3v3H6zM1 22h3v3H1z" fill="#123a9e" />
    </svg>
  )
}

function Task({ icon, children, active }){
  return (
    <button className={`mt-3 flex h-11 w-[119px] shrink-0 items-center gap-2 rounded-[4px] border-t pb-3 pl-[14px] text-white ${active ? 'border-[#123c96] bg-[#1c48ae]' : 'border-[#6aa2fa] bg-[#3a78ec]'}`}>
      {icon}{children}
    </button>
  )
}

function Taskbar(){
  return (
    <footer className="h-[37px] shrink-0 overflow-hidden">
      <div className="flex h-14 items-center bg-linear-to-b from-[#3b8cf0] via-[#245adb] via-30% to-[#2158d8]">
        <button className="mt-2 flex h-12 w-[140px] shrink-0 items-center gap-1 self-start rounded-tr-[10px] border-t-2 border-[#6bbb62] bg-[#3b8a3c] pb-3 pl-2">
          <Flag className="h-8 w-8" />
          <span className="font-['Open_Sans',sans-serif] text-[25px] leading-6 font-bold text-white italic [text-shadow:1px_2px_2px_#1d4a1d]">start</span>
        </button>
        <div className="ml-[14px]"><Grip /></div>
        <div className="ml-3 flex w-[622px] shrink-0 justify-between">
          {QUICK.map(([label, art]) => (
            <button key={label} aria-label={label}><Svg className="h-6 w-6" box="0 0 24 25">{art}</Svg></button>
          ))}
        </div>
        <div className="mr-2 ml-[68px]"><Grip /></div>
        <div className="flex gap-0.5">
          <Task icon={<Svg className="h-6 w-6" box="0 0 24 25"><BrushArt /></Svg>}>7.b...</Task>
          <Task icon={<Computer />}>My ...</Task>
          <Task active icon={<OldPc />}>Dev...</Task>
        </div>
      </div>
    </footer>
  )
}

function Banner(){
  return (
    <div className="absolute bottom-[21px] left-4 flex gap-5">
      {['COMMODORE', 'AMIGA', 'RETRO'].map(word => (
        <div key={word} className="flex gap-0.5">
          {word.split('').map((ch, i) => (
            <span key={i} className="h-[34px] w-[34px] rounded-[6px] border border-white text-center font-['Roboto',sans-serif] text-[26px] leading-[34px] text-white">{ch}</span>
          ))}
        </div>
      ))}
    </div>
  )
}

export default function App(){
  return (
    <div className={`relative flex h-screen flex-col overflow-hidden bg-black text-[16px] leading-6 text-black ${UI}`}>
      <main className="relative min-h-0 flex-1 overflow-hidden">
        <Properties />
        <MyComputer />
        <DeviceManager />
      </main>
      <Taskbar />
      <Banner />
    </div>
  )
}
